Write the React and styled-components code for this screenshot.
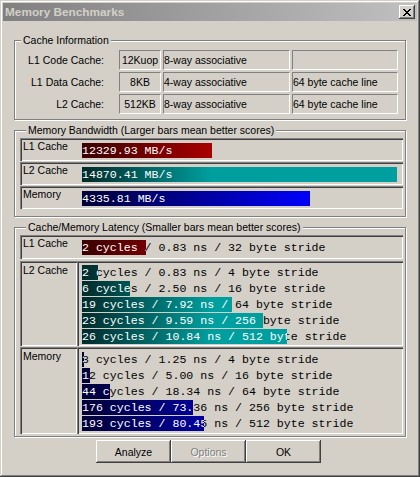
import React from "react";
import styled, { createGlobalStyle } from "styled-components";

const GlobalStyle = createGlobalStyle`
  html, body {
    margin: 0;
    padding: 0;
    background: #d4d0c8;
  }
`;

const FACE = "#d4d0c8";
const UI_FONT = `"Liberation Sans", Arial, sans-serif`;
const MONO_FONT = `"Liberation Mono", "Courier New", monospace`;

const tones = {
  red: "linear-gradient(to right, #3a0000 0px, #a80000 130px, #a80000 100%)",
  teal: "linear-gradient(to right, #002a2a 0px, #009f9f 130px, #009f9f 100%)",
  blue: "linear-gradient(to right, #000036 0px, #0000f4 220px, #0000f4 100%)",
};

const cacheInfo = [
  ["L1 Code Cache:", "12Kuop", "8-way associative", ""],
  ["L1 Data Cache:", "8KB", "4-way associative", "64 byte cache line"],
  ["L2 Cache:", "512KB", "8-way associative", "64 byte cache line"],
];

const bandwidth = [
  { label: "L1 Cache", text: "12329.93 MB/s", width: 130, tone: "red" },
  { label: "L2 Cache", text: "14870.41 MB/s", width: 315, tone: "teal" },
  { label: "Memory", text: "4335.81 MB/s", width: 228, tone: "blue" },
];

const l2Latency = [
  { text: "2 cycles / 0.83 ns / 4 byte stride", width: 16 },
  { text: "6 cycles / 2.50 ns / 16 byte stride", width: 48 },
  { text: "19 cycles / 7.92 ns / 64 byte stride", width: 150 },
  { text: "23 cycles / 9.59 ns / 256 byte stride", width: 181 },
  { text: "26 cycles / 10.84 ns / 512 byte stride", width: 205 },
];

const memLatency = [
  { text: "3 cycles / 1.25 ns / 4 byte stride", width: 2 },
  { text: "12 cycles / 5.00 ns / 16 byte stride", width: 8 },
  { text: "44 cycles / 18.34 ns / 64 byte stride", width: 28 },
  { text: "176 cycles / 73.36 ns / 256 byte stride", width: 111 },
  { text: "193 cycles / 80.45 ns / 512 byte stride", width: 122 },
];

const Window = styled.div`
  width: 420px;
  height: 477px;
  box-sizing: border-box;
  padding: 3px;
  display: flex;
  flex-direction: column;
  background: ${FACE};
  box-shadow: inset -1px -1px 0 #404040, inset 1px 1px 0 ${FACE},
    inset -2px -2px 0 #808080, inset 2px 2px 0 #ffffff;
  font-family: ${UI_FONT};
  font-size: 10.5px;
  color: #000;
`;

const TitleBar = styled.div`
  height: 18px;
  display: flex;
  align-items: center;
  justify-content: space-between;
  padding: 0 2px;
  background: linear-gradient(to right, #808080, #c0c0c0);
`;

const Title = styled.span`
  font-family: ${UI_FONT};
  font-weight: bold;
  font-size: 11.8px;
  color: ${FACE};
  line-height: 18px;
`;

const CloseButton = styled.div`
  width: 16px;
  height: 14px;
  box-sizing: border-box;
  display: flex;
  align-items: center;
  justify-content: center;
  background: ${FACE};
  box-shadow: inset -1px -1px 0 #404040, inset 1px 1px 0 #ffffff,
    inset -2px -2px 0 #808080;
`;

const Body = styled.div`
  flex: 1;
  display: flex;
  flex-direction: column;
  gap: 4px;
  padding: 13px 11px 0 11px;
`;

const Group = styled.fieldset`
  margin: 0;
  min-width: 0;
  padding: ${(p) => p.$pad || "1px 2px 2px 5px"};
  border: 1px solid #808080;
  box-shadow: 1px 1px 0 #ffffff, inset 1px 1px 0 #ffffff;
`;

const Legend = styled.legend`
  margin-left: 6px;
  padding: 0 2px;
  line-height: 13px;
  background: ${FACE};
`;

const InfoGrid = styled.div`
  display: grid;
  grid-template-columns: 102px 42px 127px 106px;
  grid-auto-rows: 20px;
  column-gap: 2px;
  row-gap: 2px;
`;

const InfoLabel = styled.div`
  display: flex;
  align-items: center;
  justify-content: flex-end;
  padding-right: 13px;
`;

const InfoCell = styled.div`
  box-sizing: border-box;
  display: flex;
  align-items: center;
  justify-content: ${(p) => (p.$center ? "center" : "flex-start")};
  border-top: 1px solid #808080;
  border-left: 1px solid #808080;
  border-bottom: 1px solid #ffffff;
  border-right: 1px solid #ffffff;
  white-space: nowrap;
`;

const RowList = styled.div`
  display: flex;
  flex-direction: column;
  gap: ${(p) => p.$gap || "1px"};
`;

/* 2px sunken edge drawn with shadows, so padding carries the edge width */
const Sunken = styled.div`
  box-sizing: border-box;
  box-shadow: inset 1px 1px 0 #808080, inset 2px 2px 0 #404040,
    inset -1px -1px 0 #ffffff;
`;

const BarRow = styled(Sunken)`
  height: ${(p) => p.$h || 23}px;
  display: grid;
  grid-template-columns: 59px 1fr;
  align-items: start;
  padding: 1px 0 0 3px;
`;

const SplitRow = styled.div`
  display: flex;
`;

const LabelBox = styled(Sunken)`
  width: 57px;
  flex: none;
  padding: 2px 0 0 3px;
`;

const ValueBox = styled(Sunken)`
  flex: 1;
  padding: ${(p) => p.$pad || "4px 0 1px 5px"};
`;

const RowLabel = styled.div`
  line-height: 13px;
  padding-top: 1px;
`;

const Track = styled.div`
  position: relative;
  height: ${(p) => p.$h || 16}px;
  margin-top: ${(p) => p.$top || 0}px;
  font-family: ${MONO_FONT};
  font-size: 11.6px;
  line-height: 15px;
  white-space: nowrap;
  color: #000;
`;

const Fill = styled.div`
  position: absolute;
  left: 0;
  top: 0;
  height: 15px;
  overflow: hidden;
  background: ${(p) => tones[p.$tone]};
  color: #ffffff;
`;

const ButtonRow = styled.div`
  display: flex;
  padding-left: 82px;
  margin-top: -1px;
`;

const Button = styled.button`
  width: 75px;
  height: 23px;
  box-sizing: border-box;
  margin: 0;
  padding: 0;
  border: none;
  background: ${FACE};
  font-family: ${UI_FONT};
  font-size: 10.5px;
  color: ${(p) => (p.disabled ? "#808080" : "#000")};
  text-shadow: ${(p) => (p.disabled ? "1px 1px 0 #ffffff" : "none")};
  box-shadow: inset -1px -1px 0 #404040, inset 1px 1px 0 #ffffff,
    inset -2px -2px 0 #808080;
`;

const CloseGlyph = () => (
  <svg width="8" height="7" viewBox="0 0 8 7" shapeRendering="crispEdges">
    <g fill="#000">
      <rect x="0" y="0" width="2" height="1" />
      <rect x="6" y="0" width="2" height="1" />
      <rect x="1" y="1" width="2" height="1" />
      <rect x="5" y="1" width="2" height="1" />
      <rect x="2" y="2" width="4" height="1" />
      <rect x="3" y="3" width="2" height="1" />
      <rect x="2" y="4" width="4" height="1" />
      <rect x="1" y="5" width="2" height="1" />
      <rect x="5" y="5" width="2" height="1" />
      <rect x="0" y="6" width="2" height="1" />
      <rect x="6" y="6" width="2" height="1" />
    </g>
  </svg>
);

const Bar = ({ text, width, tone, h, top }) => (
  <Track $h={h} $top={top}>
    {text}
    <Fill $tone={tone} style={{ width: `${width}px` }}>
      {text}
    </Fill>
  </Track>
);

const App = () => {
  return (
    <>
      <GlobalStyle />
      <Window>
        <TitleBar>
          <Title>Memory Benchmarks</Title>
          <CloseButton>
            <CloseGlyph />
          </CloseButton>
        </TitleBar>
        <Body>
          <Group $pad="3px 2px 5px 0">
            <Legend>Cache Information</Legend>
            <InfoGrid>
              {cacheInfo.map((row) => (
                <React.Fragment key={row[0]}>
                  <InfoLabel>{row[0]}</InfoLabel>
                  <InfoCell $center>{row[1]}</InfoCell>
                  <InfoCell>{row[2]}</InfoCell>
                  <InfoCell>{row[3]}</InfoCell>
                </React.Fragment>
              ))}
            </InfoGrid>
          </Group>

          <Group $pad="1px 2px 7px 5px">
            <Legend>Memory Bandwidth (Larger bars mean better scores)</Legend>
            <RowList>
              {bandwidth.map((b) => (
                <BarRow key={b.label}>
                  <RowLabel>{b.label}</RowLabel>
                  <Bar text={b.text} width={b.width} tone={b.tone} h={15} top={4} />
                </BarRow>
              ))}
            </RowList>
          </Group>

          <Group $pad="1px 2px 2px 5px">
            <Legend>Cache/Memory Latency (Smaller bars mean better scores)</Legend>
            <RowList $gap="2px">
              <BarRow $h={24}>
                <RowLabel>L1 Cache</RowLabel>
                <Bar
                  text="2 cycles / 0.83 ns / 32 byte stride"
                  width={64}
                  tone="red"
                  h={15}
                  top={4}
                />
              </BarRow>
              <RowList $gap="1px">
                <SplitRow>
                  <LabelBox>
                    <RowLabel>L2 Cache</RowLabel>
                  </LabelBox>
                  <ValueBox $pad="4px 0 1px 5px">
                    {l2Latency.map((r) => (
                      <Bar key={r.text} text={r.text} width={r.width} tone="teal" />
                    ))}
                  </ValueBox>
                </SplitRow>
                <SplitRow>
                  <LabelBox>
                    <RowLabel>Memory</RowLabel>
                  </LabelBox>
                  <ValueBox $pad="5px 0 2px 5px">
                    {memLatency.map((r) => (
                      <Bar key={r.text} text={r.text} width={r.width} tone="blue" />
                    ))}
                  </ValueBox>
                </SplitRow>
              </RowList>
            </RowList>
          </Group>

          <ButtonRow>
            <Button>Analyze</Button>
            <Button disabled>Options</Button>
            <Button>OK</Button>
          </ButtonRow>
        </Body>
      </Window>
    </>
  );
};

export default App;
